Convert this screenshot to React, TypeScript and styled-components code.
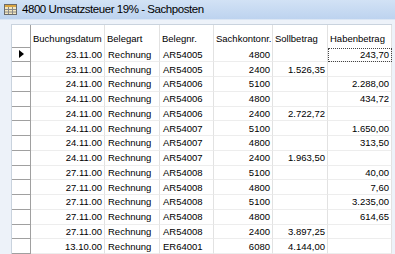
import React from "react";
import styled, { createGlobalStyle } from "styled-components";

const GlobalStyle = createGlobalStyle`
  html, body {
    margin: 0;
    padding: 0;
    background: #eef3fa;
    overflow: hidden;
  }
  body {
    font-family: "Liberation Sans", Arial, sans-serif;
  }
`;

const Window = styled.div`
  width: 395px;
  height: 254px;
  display: flex;
  flex-direction: column;
  background: #eaf0f8;
  overflow: hidden;
`;

const TitleBar = styled.div`
  height: 20px;
  display: flex;
  align-items: center;
  gap: 5px;
  padding-left: 4px;
  background: linear-gradient(#d2e2f5, #bdd3ef);
  border-bottom: 1px solid #dbe6f4;
`;

const TitleText = styled.span`
  font-size: 11.5px;
  letter-spacing: -0.45px;
  color: #000;
`;

const Body = styled.div`
  flex: 1;
  padding: 4px 3px 0 11px;
  background: #edf2f9;
`;

const Grid = styled.div`
  background: #fff;
  border-top: 1px solid #c9d3de;
  border-left: 1px solid #c9d3de;
  height: 100%;
`;

const Row = styled.div<{ $header?: boolean }>`
  display: grid;
  grid-template-columns: 19px 74px 55px 54px 59px 55px 64px;
  height: ${(p) => (p.$header ? "23px" : "14.75px")};
  align-items: stretch;
`;

const Cell = styled.div<{ $right?: boolean; $header?: boolean; $focus?: boolean }>`
  display: flex;
  align-items: ${(p) => (p.$header ? "flex-end" : "center")};
  justify-content: ${(p) => (p.$right ? "flex-end" : "flex-start")};
  padding: ${(p) => (p.$header ? "0 2px 4px 2px" : "0 2px 0 3px")};
  font-size: 9.5px;
  color: #000;
  white-space: nowrap;
  overflow: hidden;
  border-right: 1px solid #e2e2e2;
  border-bottom: ${(p) => (p.$header ? "none" : "1px solid #ededed")};
  outline: ${(p) => (p.$focus ? "1px dotted #444" : "none")};
  outline-offset: -1px;
  box-sizing: border-box;
`;

const Selector = styled.div`
  display: flex;
  align-items: center;
  justify-content: center;
  border-right: 1px solid #a0a0a0;
  border-bottom: 1px solid #a0a0a0;
  background: #fff;
  box-sizing: border-box;
`;

const Arrow = styled.div`
  width: 0;
  height: 0;
  border-top: 4px solid transparent;
  border-bottom: 4px solid transparent;
  border-left: 5px solid #000;
`;

const TableIcon = () => (
  <svg width="13" height="11" viewBox="0 0 13 11">
    <rect x="0.5" y="0.5" width="12" height="10" fill="#f3e7c0" stroke="#6b6b6b" />
    <rect x="1" y="1" width="11" height="2" fill="#d9a441" />
    <line x1="1" y1="5.5" x2="12" y2="5.5" stroke="#8a8a8a" />
    <line x1="1" y1="8" x2="12" y2="8" stroke="#8a8a8a" />
    <line x1="4.5" y1="3" x2="4.5" y2="10" stroke="#8a8a8a" />
    <line x1="8.5" y1="3" x2="8.5" y2="10" stroke="#8a8a8a" />
  </svg>
);

type Entry = {
  datum: string;
  art: string;
  nr: string;
  konto: string;
  soll: string;
  haben: string;
};

const entries: Entry[] = [
  { datum: "23.11.00", art: "Rechnung", nr: "AR54005", konto: "4800", soll: "", haben: "243,70" },
  { datum: "23.11.00", art: "Rechnung", nr: "AR54005", konto: "2400", soll: "1.526,35", haben: "" },
  { datum: "24.11.00", art: "Rechnung", nr: "AR54006", konto: "5100", soll: "", haben: "2.288,00" },
  { datum: "24.11.00", art: "Rechnung", nr: "AR54006", konto: "4800", soll: "", haben: "434,72" },
  { datum: "24.11.00", art: "Rechnung", nr: "AR54006", konto: "2400", soll: "2.722,72", haben: "" },
  { datum: "24.11.00", art: "Rechnung", nr: "AR54007", konto: "5100", soll: "", haben: "1.650,00" },
  { datum: "24.11.00", art: "Rechnung", nr: "AR54007", konto: "4800", soll: "", haben: "313,50" },
  { datum: "24.11.00", art: "Rechnung", nr: "AR54007", konto: "2400", soll: "1.963,50", haben: "" },
  { datum: "27.11.00", art: "Rechnung", nr: "AR54008", konto: "5100", soll: "", haben: "40,00" },
  { datum: "27.11.00", art: "Rechnung", nr: "AR54008", konto: "4800", soll: "", haben: "7,60" },
  { datum: "27.11.00", art: "Rechnung", nr: "AR54008", konto: "5100", soll: "", haben: "3.235,00" },
  { datum: "27.11.00", art: "Rechnung", nr: "AR54008", konto: "4800", soll: "", haben: "614,65" },
  { datum: "27.11.00", art: "Rechnung", nr: "AR54008", konto: "2400", soll: "3.897,25", haben: "" },
  { datum: "13.10.00", art: "Rechnung", nr: "ER64001", konto: "6080", soll: "4.144,00", haben: "" },
];

export default function App() {
  return (
    <>
      <GlobalStyle />
      <Window>
        <TitleBar>
          <TableIcon />
          <TitleText>4800 Umsatzsteuer 19% - Sachposten</TitleText>
        </TitleBar>
        <Body>
          <Grid>
            <Row $header>
              <Selector />
              <Cell $header>Buchungsdatum</Cell>
              <Cell $header>Belegart</Cell>
              <Cell $header>Belegnr.</Cell>
              <Cell $header>Sachkontonr.</Cell>
              <Cell $header>Sollbetrag</Cell>
              <Cell $header>Habenbetrag</Cell>
            </Row>
            {entries.map((e, i) => (
              <Row key={i}>
                <Selector>{i === 0 && <Arrow />}</Selector>
                <Cell $right>{e.datum}</Cell>
                <Cell>{e.art}</Cell>
                <Cell>{e.nr}</Cell>
                <Cell $right>{e.konto}</Cell>
                <Cell $right>{e.soll}</Cell>
                <Cell $right $focus={i === 0}>{e.haben}</Cell>
              </Row>
            ))}
          </Grid>
        </Body>
      </Window>
    </>
  );
}
